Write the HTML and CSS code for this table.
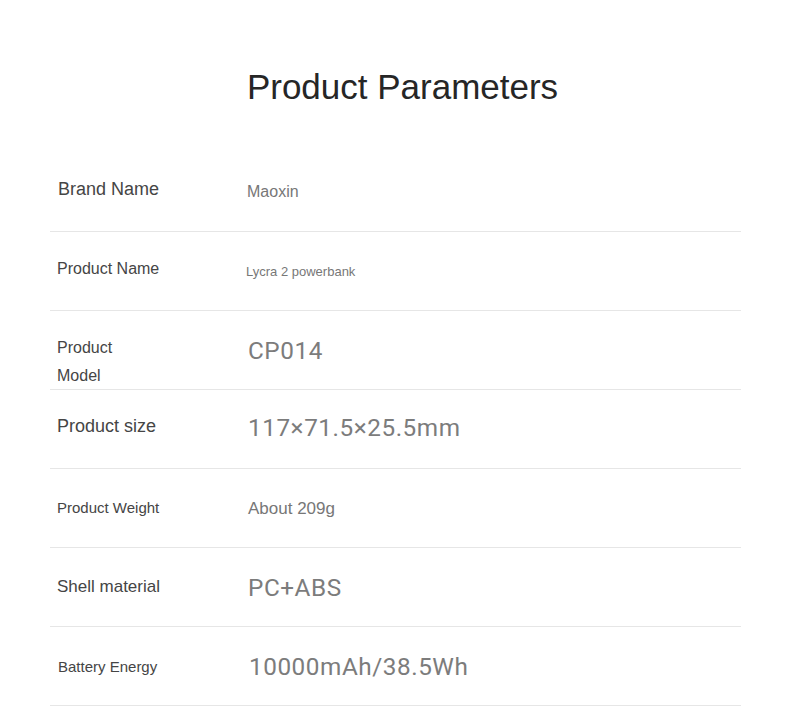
FILE: index.html
```html
<!DOCTYPE html>
<html lang="en">
<head>
<meta charset="utf-8">
<title>Product Parameters</title>
<link rel="stylesheet" href="styles.css">
</head>
<body>
<main class="page">
  <h1 class="title">Product Parameters</h1>
  <div class="table">
    <div class="row">
      <div class="label l18 lx up">Brand Name</div>
      <div class="value v16">Maoxin</div>
    </div>
    <div class="row">
      <div class="label l16">Product Name</div>
      <div class="value v12">Lycra 2 powerbank</div>
    </div>
    <div class="row">
      <div class="label l16 bottom">Product<br>Model</div>
      <div class="value big">CP014</div>
    </div>
    <div class="row">
      <div class="label l18 up">Product size</div>
      <div class="value big up2">117×71.5×25.5mm</div>
    </div>
    <div class="row">
      <div class="label l15 down">Product Weight</div>
      <div class="value v17">About 209g</div>
    </div>
    <div class="row">
      <div class="label l17 down2">Shell material</div>
      <div class="value big">PC+ABS</div>
    </div>
    <div class="row">
      <div class="label l15 lx down2">Battery Energy</div>
      <div class="value big">10000mAh/38.5Wh</div>
    </div>
  </div>
</main>
</body>
</html>
```

FILE: styles.css
```css
html, body {
  margin: 0;
  padding: 0;
  background: #ffffff;
}

body {
  font-family: "Liberation Sans", Arial, sans-serif;
  width: 790px;
  height: 717px;
  overflow: hidden;
}

.page {
  padding: 0 49px 0 50px;
}

.title {
  margin: 66px 0 45px;
  font-size: 35px;
  line-height: 42px;
  font-weight: 400;
  color: #262626;
  text-align: center;
  padding-left: 14px;
}

.table {
  display: flex;
  flex-direction: column;
}

.row {
  display: flex;
  align-items: center;
  height: 78px;
  border-bottom: 1px solid #e6e6e6;
}

.label {
  width: 190px;
  padding-left: 7px;
  color: #454545;
  margin-top: -4px;
}

.label.lx {
  padding-left: 8px;
}

.label.up { margin-top: -6px; }
.label.down { margin-top: -2px; }
.label.down2 { margin-top: 0; }

.label.bottom {
  align-self: flex-end;
  margin-top: 0;
  margin-bottom: -1px;
  line-height: 28px;
}

.l18 { font-size: 18px; }
.l17 { font-size: 17px; }
.l16 { font-size: 16px; }
.l15 { font-size: 15px; }

.value {
  color: #777777;
}

.v16 { font-size: 16px; margin-left: -1px; }
.v12 { font-size: 13px; margin-left: -1px; }
.v17 { font-size: 17px; margin-left: 1px; margin-top: 2px; }

.big {
  font-family: Roboto, "Liberation Sans", sans-serif;
  font-weight: 400;
  font-size: 24.3px;
  letter-spacing: 0.55px;
  color: #7c7c7c;
  margin-left: 1px;
}

.big.up2 { margin-top: -3px; }
```
